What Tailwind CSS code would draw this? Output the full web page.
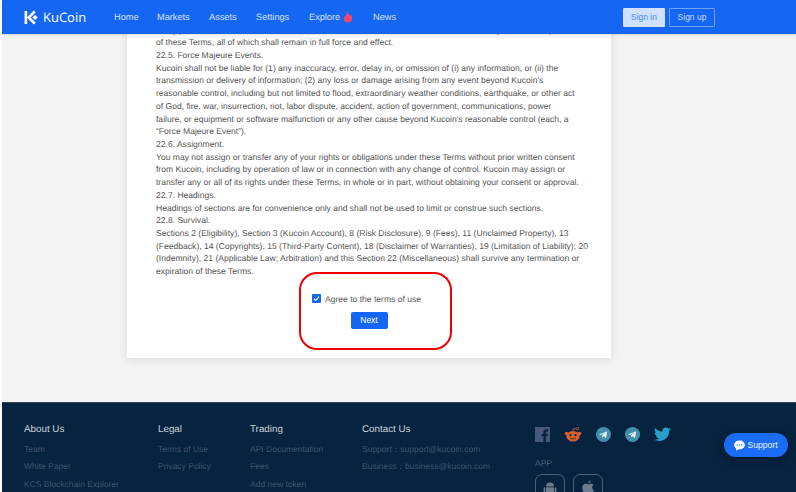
<!DOCTYPE html>
<html lang="en">
<head>
    <meta charset="UTF-8">
    <meta name="viewport" content="width=device-width, initial-scale=1.0">
    <script src="https://cdn.jsdelivr.net/npm/@tailwindcss/browser@4"></script>
    <title>KuCoin - Terms of Use</title>
</head>
<body class="bg-white font-['Liberation_Sans',Arial,sans-serif] [text-rendering:geometricPrecision]">
<div class="relative h-[492px] w-[796px] overflow-hidden pl-[2px] flex flex-col">

    <!-- Header -->
    <header class="absolute left-[2px] right-0 top-0 z-10 h-[34px] bg-[#1567f3] flex items-center shadow-sm">
        <div class="flex items-center ml-[22px] w-[90px] gap-[4px] text-white">
            <svg width="15" height="15" viewBox="0 0 16 16" fill="none" stroke="white">
                <path d="M2 1V15" stroke-width="2.8"/>
                <path d="M11.5 1.5L5 8L11.5 14.5" stroke-width="2.8"/>
                <path d="M9.5 8L11.8 5.7L14.1 8L11.8 10.3Z" fill="white" stroke-width="0.8"/>
            </svg>
            <span class="font-['Open_Sans',sans-serif] text-[13px] leading-none">KuCoin</span>
        </div>
        <nav class="flex items-center pt-[1px] text-[9.2px] text-white/80">
            <a class="w-[43px]">Home</a>
            <a class="w-[52px]">Markets</a>
            <a class="w-[47px]">Assets</a>
            <a class="w-[53px]">Settings</a>
            <a class="w-[64px] flex items-center gap-[3px]">Explore
                <svg width="10" height="12" viewBox="0 0 9 11"><path d="M4 0.5C5.5 2 5 3.5 5.6 4.2C6 3.8 6.2 3.4 6.3 3C7.6 4.2 8.6 5.6 8.4 7.2C8.2 9.4 6.4 10.6 4.4 10.6C2.3 10.6 0.6 9.2 0.6 7.2C0.6 5.4 2 5 2.8 3.6C3.3 2.7 3.6 1.6 4 0.5Z" fill="#f0476a"/></svg>
            </a>
            <a>News</a>
        </nav>
        <div class="ml-auto mr-[81px] flex items-center gap-[4px] text-[8.5px]">
            <button class="h-[19px] w-[42px] rounded-[1px] bg-[#d0e1fd] text-[#4a8cf5]">Sign in</button>
            <button class="h-[19px] w-[46px] rounded-[1px] border border-[#6ea2f8] text-[#c5daff]">Sign up</button>
        </div>
    </header>

    <!-- Terms -->
    <main class="h-[402px] shrink-0 bg-[#f4f4f4] pl-[125px]">
        <div class="relative h-[358px] w-[484px] bg-white shadow-[0_2px_10px_rgba(0,0,0,0.1)] flex flex-col items-center">
            <p class="w-full pl-[29px] pt-[23.5px] text-[8.55px] leading-[12.72px] text-[#555] whitespace-nowrap">
                If any provision of these Terms is held invalid or unenforceable, it shall not affect the validity of the other provisions<br>
                of these Terms, all of which shall remain in full force and effect.<br>
                22.5. Force Majeure Events.<br>
                Kucoin shall not be liable for (1) any inaccuracy, error, delay in, or omission of (i) any information, or (ii) the<br>
                transmission or delivery of information; (2) any loss or damage arising from any event beyond Kucoin's<br>
                reasonable control, including but not limited to flood, extraordinary weather conditions, earthquake, or other act<br>
                of God, fire, war, insurrection, riot, labor dispute, accident, action of government, communications, power<br>
                failure, or equipment or software malfunction or any other cause beyond Kucoin's reasonable control (each, a<br>
                “Force Majeure Event”).<br>
                22.6. Assignment.<br>
                You may not assign or transfer any of your rights or obligations under these Terms without prior written consent<br>
                from Kucoin, including by operation of law or in connection with any change of control. Kucoin may assign or<br>
                transfer any or all of its rights under these Terms, in whole or in part, without obtaining your consent or approval.<br>
                22.7. Headings.<br>
                Headings of sections are for convenience only and shall not be used to limit or construe such sections.<br>
                22.8. Survival.<br>
                Sections 2 (Eligibility), Section 3 (Kucoin Account), 8 (Risk Disclosure), 9 (Fees), 11 (Unclaimed Property), 13<br>
                (Feedback), 14 (Copyrights), 15 (Third-Party Content), 18 (Disclaimer of Warranties), 19 (Limitation of Liability); 20<br>
                (Indemnity), 21 (Applicable Law; Arbitration) and this Section 22 (Miscellaneous) shall survive any termination or<br>
                expiration of these Terms.
            </p>
            <label class="mt-[15px] mr-[5px] flex items-center gap-[4px] text-[8.55px] leading-[12px] text-[#555]">
                <span class="h-[9px] w-[9px] rounded-[1px] bg-[#1567f3] flex items-center justify-center">
                    <svg width="7" height="7" viewBox="0 0 8 8" fill="none"><path d="M1 4.2L3.2 6.2L7 1.8" stroke="white" stroke-width="1.4"/></svg>
                </span>
                Agree to the terms of use
            </label>
            <button class="mt-[7px] h-[17px] w-[37px] rounded-[2px] bg-[#1567f3] text-[8.5px] text-white">Next</button>
            <!-- red annotation -->
            <div class="absolute left-[172px] top-[272px] h-[78px] w-[153px] rounded-[18px] border-2 border-[#ee0000]"></div>
        </div>
    </main>

    <!-- Footer -->
    <footer class="flex-1 bg-[#062340] flex pl-[22px] pt-[19.5px] border-t border-[#31475f]">
        <div class="w-[134px]">
            <h4 class="text-[9.8px] leading-[13px] mb-[5px] text-[#ccd3da]">About Us</h4>
            <ul class="text-[8.5px] leading-[17.5px] text-[#3f566d]">
                <li>Team</li>
                <li>White Paper</li>
                <li>KCS Blockchain Explorer</li>
            </ul>
        </div>
        <div class="w-[92px]">
            <h4 class="text-[9.8px] leading-[13px] mb-[5px] text-[#ccd3da]">Legal</h4>
            <ul class="text-[8.5px] leading-[17.5px] text-[#3f566d]">
                <li>Terms of Use</li>
                <li>Privacy Policy</li>
            </ul>
        </div>
        <div class="w-[112px]">
            <h4 class="text-[9.8px] leading-[13px] mb-[5px] text-[#ccd3da]">Trading</h4>
            <ul class="text-[8.5px] leading-[17.5px] text-[#3f566d]">
                <li>API Documentation</li>
                <li>Fees</li>
                <li>Add new token</li>
            </ul>
        </div>
        <div class="w-[173px]">
            <h4 class="text-[9.8px] leading-[13px] mb-[5px] text-[#ccd3da]">Contact Us</h4>
            <ul class="text-[8.5px] leading-[17.5px] text-[#3f566d]">
                <li>Support：support@kucoin.com</li>
                <li>Business：business@kucoin.com</li>
            </ul>
        </div>
        <div class="flex flex-col">
            <div class="flex items-center gap-[14px] h-[17px] mt-[3px]">
                <!-- facebook -->
                <svg width="15" height="15" viewBox="0 0 15 15"><path fill-rule="evenodd" d="M0 0H15V15H10.8V9.3H12.7L13 7H10.8V5.6C10.8 4.9 11 4.5 12 4.5H13V2.4C12.8 2.4 12.1 2.3 11.3 2.3C9.6 2.3 8.4 3.4 8.4 5.3V7H6.5V9.3H8.4V15H0Z" fill="#46587c"/></svg>
                <!-- reddit -->
                <svg width="18" height="15" viewBox="0 0 17 15">
                    <path d="M8.5 5V2L11.5 1.4" stroke="#d9602c" stroke-width="0.8" fill="none"/>
                    <circle cx="13" cy="1.6" r="1.3" fill="none" stroke="#d9602c" stroke-width="0.8"/>
                    <circle cx="2" cy="6.5" r="1.8" fill="#d9602c"/>
                    <circle cx="15" cy="6.5" r="1.8" fill="#d9602c"/>
                    <ellipse cx="8.5" cy="9.2" rx="6.6" ry="5.2" fill="#d9602c"/>
                    <circle cx="6" cy="8.2" r="1.1" fill="#062340"/>
                    <circle cx="11" cy="8.2" r="1.1" fill="#062340"/>
                    <path d="M5.8 11C7.2 12.2 9.8 12.2 11.2 11" stroke="#062340" stroke-width="0.8" fill="none"/>
                </svg>
                <!-- telegram -->
                <svg width="15" height="15" viewBox="0 0 15 15"><circle cx="7.5" cy="7.5" r="7.5" fill="#4390ad"/><path d="M3 7.4L11.2 4.2L10 11L7.6 9.3L6.3 10.6L6.1 8.5L9.6 5.6L5.2 8.1Z" fill="#e6f0f5"/></svg>
                <svg width="15" height="15" viewBox="0 0 15 15"><circle cx="7.5" cy="7.5" r="7.5" fill="#4390ad"/><path d="M3 7.4L11.2 4.2L10 11L7.6 9.3L6.3 10.6L6.1 8.5L9.6 5.6L5.2 8.1Z" fill="#e6f0f5"/></svg>
                <!-- twitter -->
                <svg width="17" height="15" viewBox="0 0 24 20"><path d="M24 2.4c-.9.4-1.8.7-2.8.8 1-.6 1.8-1.6 2.2-2.7-1 .6-2 1-3.1 1.2C19.3.7 18 0 16.6 0c-2.7 0-4.9 2.2-4.9 4.9 0 .4 0 .8.1 1.1C7.7 5.8 4.1 3.9 1.7.9c-.4.7-.7 1.6-.7 2.5 0 1.7.9 3.2 2.2 4.1-.8 0-1.6-.2-2.2-.6v.1c0 2.4 1.7 4.4 3.9 4.8-.4.1-.8.2-1.3.2-.3 0-.6 0-.9-.1.6 2 2.4 3.4 4.6 3.4-1.7 1.3-3.8 2.1-6.1 2.1-.4 0-.8 0-1.2-.1C2.2 18.3 4.8 19 7.5 19c9.1 0 14-7.5 14-14v-.6c1-.7 1.8-1.6 2.5-2z" fill="#2b9fc9"/></svg>
            </div>
            <span class="mt-[15px] text-[8.5px] leading-[11px] text-[#4c6074]">APP</span>
            <div class="mt-[5px] flex gap-[8px]">
                <span class="h-[30px] w-[30px] rounded-[7px] border border-[#4c6074] flex justify-center pt-[6px]">
                    <svg width="14" height="15" viewBox="0 0 14 15" fill="#6b7c8d"><path d="M3 5.5A4 4 0 0 1 11 5.5Z"/><rect x="3" y="6.2" width="8" height="7" rx="1"/><rect x="0.6" y="6.2" width="1.7" height="5" rx="0.8"/><rect x="11.7" y="6.2" width="1.7" height="5" rx="0.8"/></svg>
                </span>
                <span class="h-[30px] w-[30px] rounded-[7px] border border-[#4c6074] flex justify-center pt-[5px]">
                    <svg width="14" height="15" viewBox="0 0 14 15" fill="#6b7c8d"><path d="M9.6 0.6C9.7 1.9 8.6 3.3 7.2 3.3C7 2 8.3 0.7 9.6 0.6Z"/><path d="M7.2 4.4C8 4.4 8.8 3.7 10 3.7C11 3.7 12 4.2 12.6 5.1C10.4 6.4 10.8 9.4 13 10.3C12.4 11.9 11.2 14 9.9 14C9 14 8.5 13.4 7.4 13.4C6.3 13.4 5.8 14 4.9 14C3.3 14 1.2 10.8 1.2 8C1.2 5.3 3 3.8 4.7 3.8C5.7 3.8 6.6 4.4 7.2 4.4Z"/></svg>
                </span>
            </div>
        </div>
    </footer>

    <!-- Support bubble -->
    <button class="absolute left-[724px] top-[433px] z-20 flex h-[24px] w-[64px] items-center justify-center gap-[2px] rounded-full bg-[#1a6cf5] text-[8.6px] text-[#e8f0ff] shadow-[0_2px_8px_rgba(0,0,0,0.3)]">
        <svg width="11" height="11" viewBox="0 0 11 11"><path d="M5.5 0.5C8.5 0.5 10.8 2.4 10.8 5C10.8 7.6 8.5 9.3 5.5 9.3C5.2 9.3 4.9 9.3 4.6 9.2L2.2 10.8V8.4C1 7.6 0.2 6.4 0.2 5C0.2 2.4 2.5 0.5 5.5 0.5Z" fill="white"/><circle cx="3.3" cy="5" r="0.7" fill="#1a6cf5"/><circle cx="5.5" cy="5" r="0.7" fill="#1a6cf5"/><circle cx="7.7" cy="5" r="0.7" fill="#1a6cf5"/></svg>
        Support
    </button>
</div>
</body>
</html>
